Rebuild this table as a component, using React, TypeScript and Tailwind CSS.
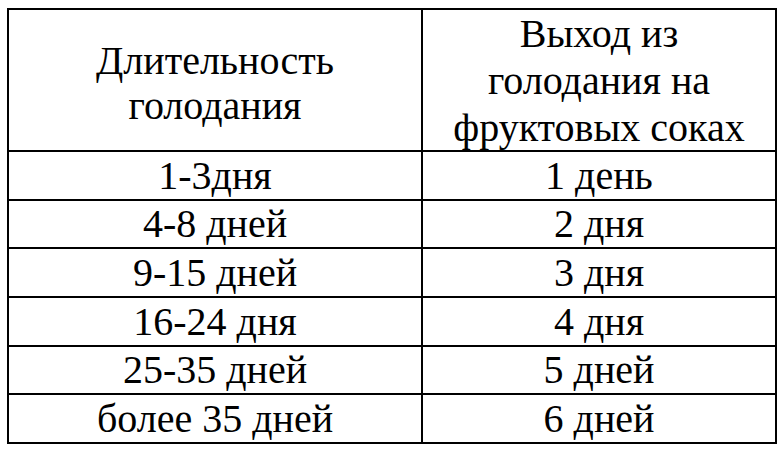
const rows: [string, string][] = [
  ["1-3дня", "1 день"],
  ["4-8 дней", "2 дня"],
  ["9-15 дней", "3 дня"],
  ["16-24 дня", "4 дня"],
  ["25-35 дней", "5 дней"],
  ["более 35 дней", "6 дней"],
];

const heights = ["h-[49px]", "h-[48px]", "h-[49px]", "h-[49px]", "h-[48px]", "h-[49px]"];

function Cell({ children, className = "" }: { children: React.ReactNode; className?: string }) {
  return (
    <div
      className={
        "flex items-center justify-center border-r-2 border-b-2 border-black text-center font-[Liberation_Serif,serif] text-[40px] " +
        className
      }
    >
      {children}
    </div>
  );
}

export default function App() {
  return (
    <div className="w-[784px] h-[452px] bg-white pl-[7px] pt-[8px] text-black font-[Liberation_Serif,serif]">
      <div className="grid w-[770px] grid-cols-[414px_354px] border-l-2 border-t-2 border-black">
        <Cell className="h-[142px] pt-[5px] leading-[45px]">
          <div>
            Длительность
            <br />
            голодания
          </div>
        </Cell>
        <Cell className="h-[142px] leading-[47px]">
          <div>
            Выход из
            <br />
            голодания на
            <br />
            фруктовых соках
          </div>
        </Cell>
        {rows.map(([a, b], i) => (
          <div key={a} className="contents">
            <Cell className={heights[i] + " leading-none"}>{a}</Cell>
            <Cell className={heights[i] + " leading-none"}>{b}</Cell>
          </div>
        ))}
      </div>
    </div>
  );
}
